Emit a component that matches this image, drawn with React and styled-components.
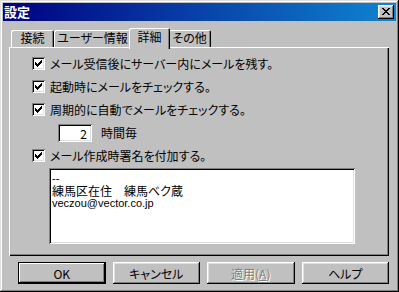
import styled, { createGlobalStyle } from 'styled-components';

const GlobalStyle = createGlobalStyle`
  html, body {
    margin: 0;
    padding: 0;
    background: #c0c0c0;
  }
  body {
    font-family: "Noto Sans CJK JP", "Liberation Sans", sans-serif;
    font-size: 12px;
    font-feature-settings: "palt";
    color: #000;
  }
`;

const raised = `
  box-shadow: inset -1px -1px #000, inset 1px 1px #fff, inset -2px -2px #808080, inset 2px 2px #dfdfdf;
`;

const sunken = `
  box-shadow: inset 1px 1px #808080, inset -1px -1px #fff, inset 2px 2px #000, inset -2px -2px #dfdfdf;
`;

const Window = styled.div`
  width: 399px;
  height: 292px;
  box-sizing: border-box;
  padding: 3px;
  background: #c0c0c0;
  box-shadow: inset -1px -1px #000, inset 1px 1px #dfdfdf, inset -2px -2px #808080, inset 2px 2px #fff;
  display: flex;
  flex-direction: column;
`;

const TitleBar = styled.div`
  height: 18px;
  display: flex;
  align-items: center;
  justify-content: space-between;
  padding: 0 2px 0 1px;
  background: linear-gradient(90deg, #000080, #1084d0);
`;

const Title = styled.span`
  color: #fff;
  font-weight: bold;
  font-size: 13px;
  line-height: 18px;
`;

const CloseButton = styled.div`
  width: 16px;
  height: 14px;
  background: #c0c0c0;
  ${raised}
  display: flex;
  align-items: center;
  justify-content: center;
  svg {
    margin: 0 1px 1px 0;
  }
`;

const Body = styled.div`
  flex: 1;
  padding: 7px 7px 0 6px;
  display: flex;
  flex-direction: column;
`;

const TabStrip = styled.div`
  height: 19px;
  display: flex;
  align-items: flex-end;
  padding-left: 2px;
`;

const Tab = styled.div`
  width: ${p => p.$w}px;
  height: ${p => (p.$active ? 21 : 17)}px;
  margin: ${p => (p.$active ? '0 -2px -2px' : '0')};
  z-index: ${p => (p.$active ? 1 : 0)};
  box-sizing: border-box;
  background: #c0c0c0;
  border-radius: 2px 2px 0 0;
  box-shadow: inset 1px 1px #fff, inset -1px 0 #000, inset -2px 0 #808080;
  display: flex;
  justify-content: center;
  padding-top: ${p => (p.$active ? 2 : 1)}px;
  line-height: 14px;
  flex-shrink: 0;
`;

const Panel = styled.div`
  height: 209px;
  box-sizing: border-box;
  padding-top: 5px;
  box-shadow: inset 1px 1px #fff, inset -1px -1px #000, inset -2px -2px #808080;
  display: flex;
  flex-direction: column;
`;

const Row = styled.div`
  height: 23px;
  display: flex;
  align-items: center;
  padding-left: ${p => p.$indent}px;
  gap: ${p => p.$gap}px;
`;

const CheckBox = styled.div`
  width: 13px;
  height: 13px;
  flex-shrink: 0;
  background: #fff;
  ${sunken}
  display: flex;
  align-items: center;
  justify-content: center;
`;

const NumberBox = styled.div`
  width: 34px;
  height: 18px;
  box-sizing: border-box;
  background: #fff;
  ${sunken}
  text-align: right;
  padding: 2px 5px 0 0;
  line-height: 15px;
`;

const SigBox = styled.div`
  width: 306px;
  height: 76px;
  box-sizing: border-box;
  margin: 1px 0 0 40px;
  padding: 4px 3px;
  background: #fff;
  ${sunken}
`;

const SigLine = styled.div`
  height: 12.5px;
  line-height: 12px;
  white-space: pre;
  font-family: ${p => (p.$latin ? '"Liberation Sans", sans-serif' : 'inherit')};
  font-size: ${p => (p.$latin ? 11 : 12)}px;
`;

const ButtonRow = styled.div`
  display: flex;
  gap: 7px;
  margin-top: 6px;
  padding-left: 9px;
`;

const Button = styled.div`
  width: 88px;
  height: 22px;
  box-sizing: border-box;
  background: #c0c0c0;
  display: flex;
  align-items: center;
  justify-content: center;
  ${p => (p.$default
    ? 'box-shadow: inset 0 0 0 1px #000, inset -2px -2px #000, inset 2px 2px #fff, inset -3px -3px #808080;'
    : raised)}
  color: ${p => (p.$disabled ? '#808080' : '#000')};
  text-shadow: ${p => (p.$disabled ? '1px 1px #fff' : 'none')};
`;

const CloseGlyph = () => (
  <svg width="8" height="7" viewBox="0 0 8 7" shapeRendering="crispEdges">
    <path
      fill="#000"
      d="M0 0h2v1H0z M6 0h2v1H6z M1 1h2v1H1z M5 1h2v1H5z M2 2h4v1H2z M3 3h2v1H3z M2 4h4v1H2z M1 5h2v1H1z M5 5h2v1H5z M0 6h2v1H0z M6 6h2v1H6z"
    />
  </svg>
);

const CheckGlyph = () => (
  <svg width="7" height="7" viewBox="0 0 7 7" shapeRendering="crispEdges">
    <path
      fill="#000"
      d="M6 0h1v1H6z M5 1h2v1H5z M0 2h1v1H0z M4 2h3v1H4z M0 3h2v1H0z M3 3h3v1H3z M0 4h5v1H0z M1 5h3v1H1z M2 6h1v1H2z"
    />
  </svg>
);

function Option({ children }) {
  return (
    <Row $indent={23} $gap={5}>
      <CheckBox><CheckGlyph /></CheckBox>
      <span>{children}</span>
    </Row>
  );
}

const tabs = [
  { label: '接続', w: 43 },
  { label: 'ユーザー情報', w: 77 },
  { label: '詳細', w: 41, active: true },
  { label: 'その他', w: 43 },
];

export default function App() {
  return (
    <>
      <GlobalStyle />
      <Window>
        <TitleBar>
          <Title>設定</Title>
          <CloseButton><CloseGlyph /></CloseButton>
        </TitleBar>
        <Body>
          <TabStrip>
            {tabs.map(t => (
              <Tab key={t.label} $w={t.w} $active={t.active}>{t.label}</Tab>
            ))}
          </TabStrip>
          <Panel>
            <Option>メール受信後にサーバー内にメールを残す。</Option>
            <Option>起動時にメールをチェックする。</Option>
            <Option>周期的に自動でメールをチェックする。</Option>
            <Row $indent={49} $gap={9}>
              <NumberBox>2</NumberBox>
              <span>時間毎</span>
            </Row>
            <Option>メール作成時署名を付加する。</Option>
            <SigBox>
              <SigLine $latin>--</SigLine>
              <SigLine>練馬区在住　練馬ベク蔵</SigLine>
              <SigLine $latin>veczou@vector.co.jp</SigLine>
            </SigBox>
          </Panel>
          <ButtonRow>
            <Button $default>OK</Button>
            <Button>キャンセル</Button>
            <Button $disabled>適用(<u>A</u>)</Button>
            <Button>ヘルプ</Button>
          </ButtonRow>
        </Body>
      </Window>
    </>
  );
}
